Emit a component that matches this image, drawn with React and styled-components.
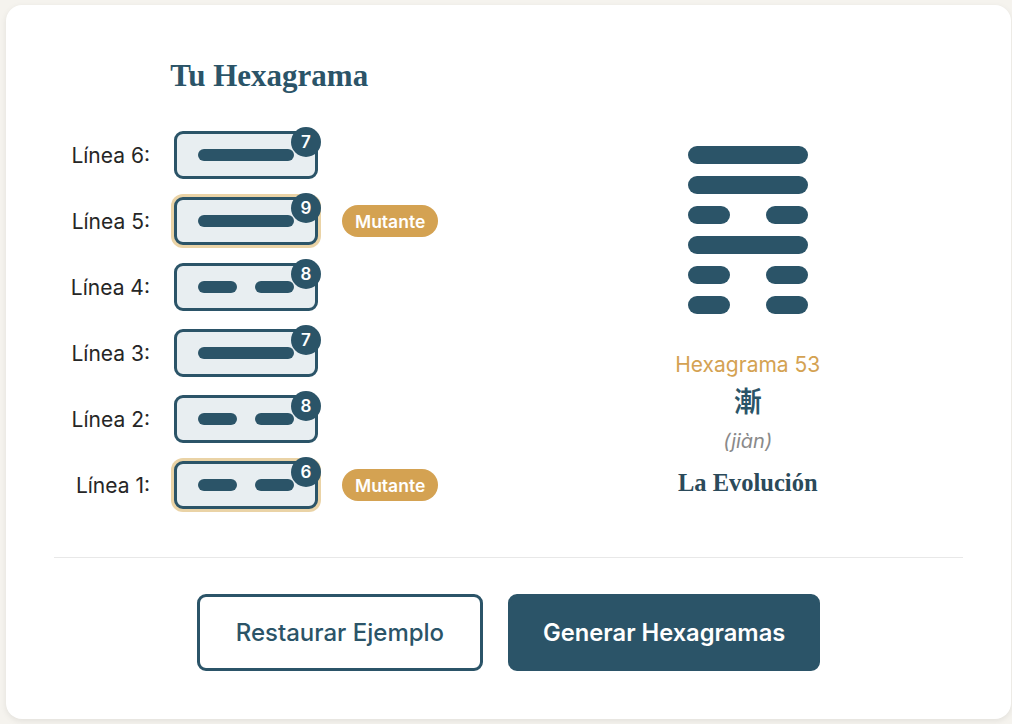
import React from 'react';
import styled, { createGlobalStyle, css } from 'styled-components';

const NAVY = '#2b5468';
const GOLD = '#d4a252';

const GlobalStyle = createGlobalStyle`
  * { box-sizing: border-box; }
  html, body {
    margin: 0;
    padding: 0;
    background: #f5f3ee;
    font-family: Inter, "Noto Sans", sans-serif;
  }
  body { padding: 5px 1px 5px 6px; }
`;

const lines = [
  { n: 6, value: 7 },
  { n: 5, value: 9 },
  { n: 4, value: 8 },
  { n: 3, value: 7 },
  { n: 2, value: 8 },
  { n: 1, value: 6 },
];

// top to bottom of hexagram 53 (jiàn)
const hexagram = [true, true, false, true, false, false];

const App = () => {
  return (
    <>
      <GlobalStyle />
      <Card>
        <Columns>
          <LeftColumn>
            <Title>Tu Hexagrama</Title>
            <LineList>
              {lines.map((line) => {
                const yang = line.value === 7 || line.value === 9;
                const mutant = line.value === 6 || line.value === 9;
                return (
                  <LineRow key={line.n}>
                    <LineLabel>Línea {line.n}:</LineLabel>
                    <LineBox $mutant={mutant}>
                      {yang ? (
                        <SolidBar />
                      ) : (
                        <>
                          <HalfBar />
                          <HalfBar />
                        </>
                      )}
                      <ValueBadge>{line.value}</ValueBadge>
                    </LineBox>
                    {mutant && <MutantTag>Mutante</MutantTag>}
                  </LineRow>
                );
              })}
            </LineList>
          </LeftColumn>

          <RightColumn>
            <Figure>
              {hexagram.map((yang, i) =>
                yang ? (
                  <BigLine key={i} />
                ) : (
                  <BigLine key={i} $broken>
                    <BigHalf />
                    <BigHalf />
                  </BigLine>
                )
              )}
            </Figure>
            <HexNumber>Hexagrama 53</HexNumber>
            <HexChar>漸</HexChar>
            <HexPinyin>(jiàn)</HexPinyin>
            <HexName>La Evolución</HexName>
          </RightColumn>
        </Columns>

        <Divider />

        <Actions>
          <Button $variant="outline">Restaurar Ejemplo</Button>
          <Button>Generar Hexagramas</Button>
        </Actions>
      </Card>
    </>
  );
};

export default App;

const Card = styled.div`
  background: #ffffff;
  border-radius: 16px;
  box-shadow: 0 2px 6px rgba(0, 0, 0, 0.08);
  padding: 48px 48px 47px;
  min-height: 714px;
`;

const Columns = styled.div`
  display: grid;
  grid-template-columns: 1fr 1fr;
  column-gap: 48px;
`;

const LeftColumn = styled.div`
  display: flex;
  flex-direction: column;
`;

const Title = styled.h2`
  margin: 5px 0 0;
  text-align: center;
  font-family: "Liberation Serif", "DejaVu Serif", serif;
  font-weight: 700;
  font-size: 31px;
  line-height: 36px;
  color: ${NAVY};
`;

const LineList = styled.div`
  display: flex;
  flex-direction: column;
  gap: 18px;
  margin-top: 37px;
`;

const LineRow = styled.div`
  display: flex;
  align-items: center;
  gap: 24px;
  height: 48px;
`;

const LineLabel = styled.span`
  width: 96px;
  text-align: right;
  font-size: 21px;
  color: #262626;
`;

const LineBox = styled.div`
  position: relative;
  width: 144px;
  height: 48px;
  border: 3px solid ${NAVY};
  border-radius: 9px;
  background: #e8eef1;
  display: flex;
  align-items: center;
  justify-content: center;
  gap: 18px;
  ${(p) =>
    p.$mutant &&
    css`
      box-shadow: 0 0 0 3px #ead3a6;
    `}
`;

const SolidBar = styled.div`
  width: 96px;
  height: 12px;
  border-radius: 6px;
  background: ${NAVY};
`;

const HalfBar = styled.div`
  width: 39px;
  height: 12px;
  border-radius: 6px;
  background: ${NAVY};
`;

const ValueBadge = styled.span`
  position: absolute;
  top: -7px;
  right: -6px;
  width: 30px;
  height: 30px;
  border-radius: 50%;
  background: ${NAVY};
  color: #ffffff;
  font-size: 17px;
  font-weight: 600;
  display: flex;
  align-items: center;
  justify-content: center;
`;

const MutantTag = styled.span`
  height: 32px;
  padding: 0 13px;
  border-radius: 16px;
  background: ${GOLD};
  color: #ffffff;
  font-size: 17.5px;
  font-weight: 600;
  display: flex;
  align-items: center;
`;

const RightColumn = styled.div`
  display: flex;
  flex-direction: column;
  align-items: center;
  padding-top: 93px;
`;

const Figure = styled.div`
  display: flex;
  flex-direction: column;
  gap: 12px;
  width: 120px;
`;

const BigLine = styled.div`
  height: 18px;
  border-radius: 9px;
  background: ${(p) => (p.$broken ? 'transparent' : NAVY)};
  display: flex;
  justify-content: space-between;
`;

const BigHalf = styled.div`
  width: 42px;
  height: 18px;
  border-radius: 9px;
  background: ${NAVY};
`;

const HexNumber = styled.div`
  margin-top: 38px;
  font-size: 21px;
  line-height: 26px;
  color: ${GOLD};
`;

const HexChar = styled.div`
  margin-top: 6px;
  font-family: "Noto Sans CJK TC", "Noto Sans CJK SC", sans-serif;
  font-size: 28px;
  font-weight: 700;
  line-height: 32px;
  color: ${NAVY};
`;

const HexPinyin = styled.div`
  margin-top: 13px;
  font-size: 20px;
  font-style: italic;
  line-height: 24px;
  color: #8a8a8a;
`;

const HexName = styled.div`
  margin-top: 16px;
  font-family: "Liberation Serif", "DejaVu Serif", serif;
  font-size: 24.5px;
  font-weight: 700;
  line-height: 28px;
  color: #2b4a5a;
`;

const Divider = styled.hr`
  margin: 48px 0 0;
  border: none;
  border-top: 1px solid #e8e8e8;
`;

const Actions = styled.div`
  display: flex;
  justify-content: center;
  gap: 25px;
  margin-top: 36px;
`;

const Button = styled.button`
  height: 77px;
  border-radius: 9px;
  font-family: Inter, "Noto Sans", sans-serif;
  font-size: 24px;
  font-weight: 500;
  cursor: pointer;
  border: 3px solid ${NAVY};
  ${(p) =>
    p.$variant === 'outline'
      ? css`
          padding: 0 36px;
          background: #ffffff;
          color: ${NAVY};
        `
      : css`
          padding: 0 32px;
          background: ${NAVY};
          color: #ffffff;
          font-size: 23.7px;
          font-weight: 600;
        `}
`;
